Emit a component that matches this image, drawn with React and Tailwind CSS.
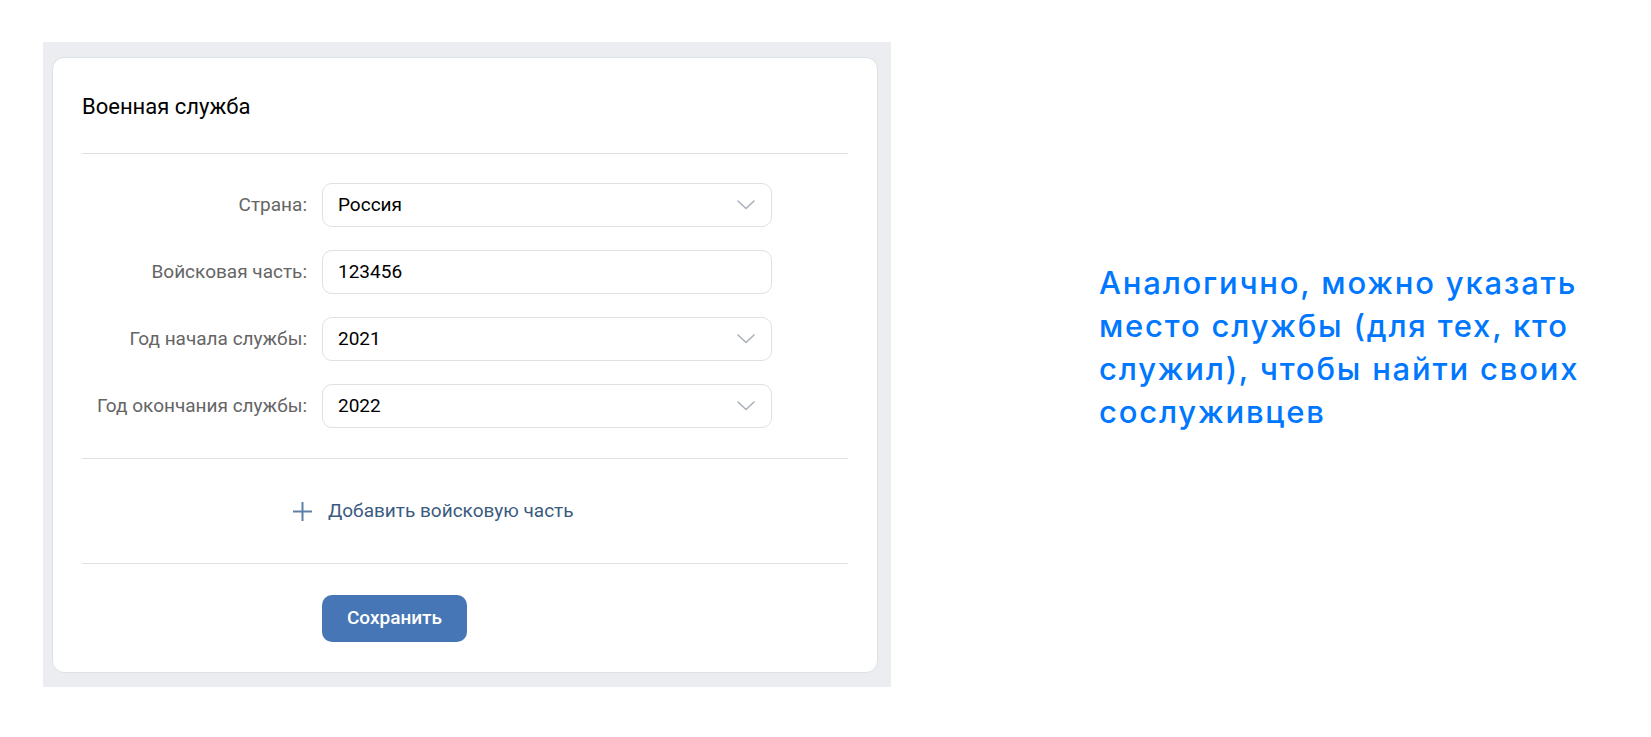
const rows = [
  { label: 'Страна:', value: 'Россия', select: true },
  { label: 'Войсковая часть:', value: '123456', select: false },
  { label: 'Год начала службы:', value: '2021', select: true },
  { label: 'Год окончания службы:', value: '2022', select: true },
];

function Chevron() {
  return (
    <svg width="18" height="10" viewBox="0 0 18 10" fill="none">
      <polyline points="1,1 9,8.5 17,1" stroke="#a9b1bc" strokeWidth="1.6" strokeLinecap="round" strokeLinejoin="round" />
    </svg>
  );
}

function Field({ label, value, select }) {
  return (
    <div className="flex items-center">
      <div className="w-[225px] shrink-0 whitespace-nowrap text-right text-[19px] text-[#656565]">{label}</div>
      <div className="ml-[15px] flex h-[44px] w-[450px] items-center justify-between rounded-[10px] border border-[#dce1e6] bg-white pl-[15px] pr-[16px]">
        <span className="text-[19px] text-black">{value}</span>
        {select && <Chevron />}
      </div>
    </div>
  );
}

export default function App() {
  return (
    <div className="flex min-h-[737px] bg-white font-['Roboto',sans-serif]">
      <div className="ml-[43px] mt-[42px] h-[645px] w-[848px] bg-[#ebedf0] pl-[9px] pr-[13px] pt-[15px] pb-[14px]">
        <div className="flex h-full flex-col rounded-[12px] border border-[#dce1e6] bg-white px-[29px]">
          <div className="flex h-[95px] items-center pt-[2px] text-[22px] text-black">Военная служба</div>
          <div className="border-t border-[#dce1e6]" />

          <div className="flex flex-col gap-[23px] pt-[29px] pb-[30px]">
            {rows.map(r => (
              <Field key={r.label} {...r} />
            ))}
          </div>

          <div className="border-t border-[#dce1e6]" />
          <div className="flex h-[104px] items-center pl-[210px]">
            <svg width="21" height="21" viewBox="0 0 21 21" fill="none">
              <path d="M10.5 1v19M1 10.5h19" stroke="#5f80a6" strokeWidth="2" />
            </svg>
            <span className="ml-[15px] text-[19px] text-[#3a5a80]">Добавить войсковую часть</span>
          </div>
          <div className="border-t border-[#dce1e6]" />

          <div className="pl-[240px] pt-[31px]">
            <button className="h-[47px] w-[145px] rounded-[10px] bg-[#4676b6] text-[19px] font-medium text-white">
              Сохранить
            </button>
          </div>
        </div>
      </div>

      <div className="ml-[208px] mt-[261px] w-[520px] font-['Inter',sans-serif] text-[31px] font-medium leading-[43px] tracking-[1.8px] text-[#0077ff]">
        Аналогично, можно указать место службы (для тех, кто служил), чтобы найти своих сослуживцев
      </div>
    </div>
  );
}
